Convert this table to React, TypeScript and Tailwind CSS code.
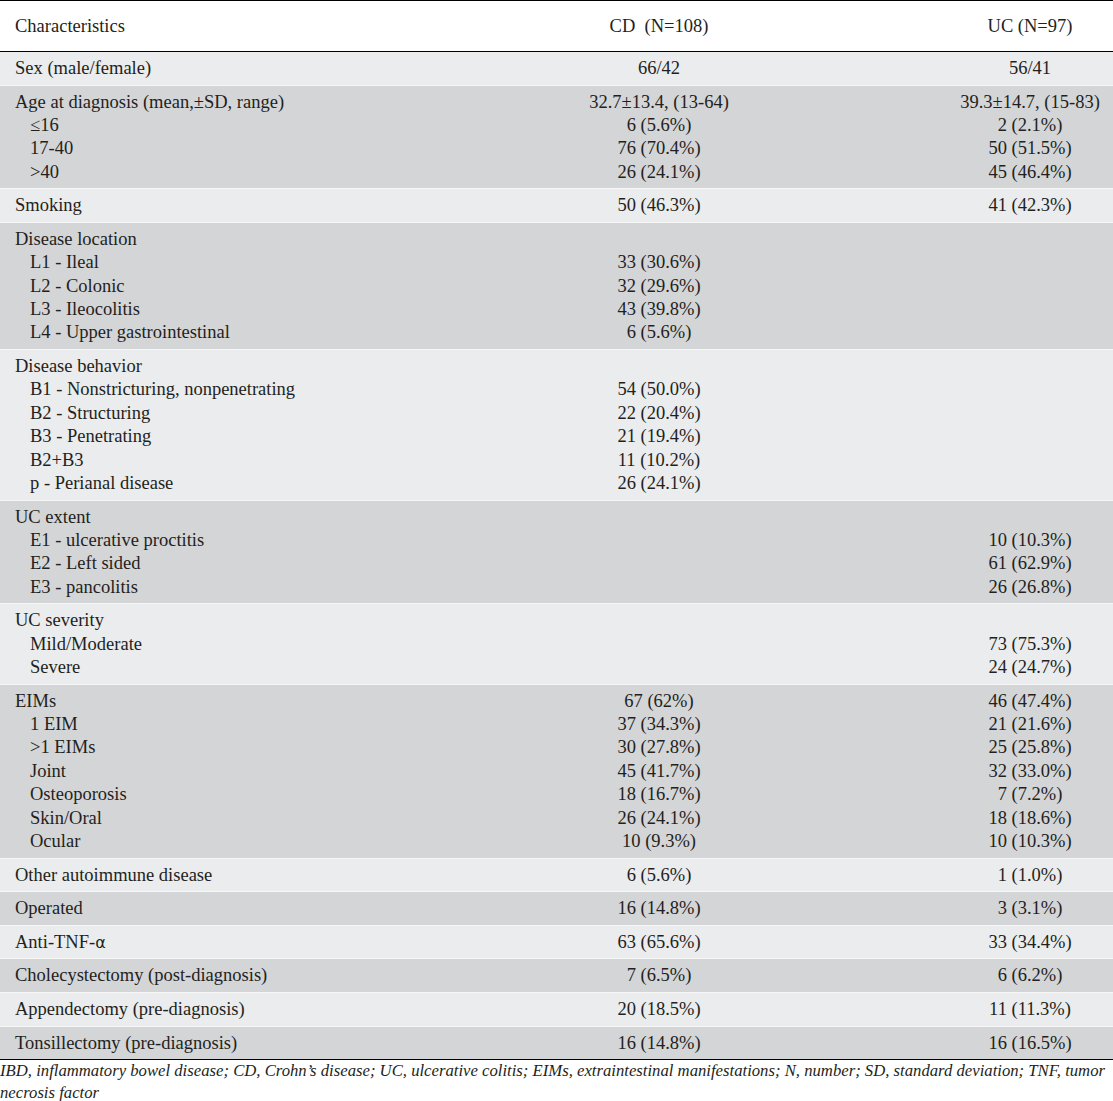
import React from "react";

type Row = { lines: [string, string, string][]; dark: boolean };

const rows: Row[] = [
  { dark: false, lines: [["Sex (male/female)", "66/42", "56/41"]] },
  {
    dark: true,
    lines: [
      ["Age at diagnosis (mean,±SD, range)", "32.7±13.4, (13-64)", "39.3±14.7, (15-83)"],
      ["  ≤16", "6 (5.6%)", "2 (2.1%)"],
      ["  17-40", "76 (70.4%)", "50 (51.5%)"],
      ["  >40", "26 (24.1%)", "45 (46.4%)"],
    ],
  },
  { dark: false, lines: [["Smoking", "50 (46.3%)", "41 (42.3%)"]] },
  {
    dark: true,
    lines: [
      ["Disease location", "", ""],
      ["  L1 - Ileal", "33 (30.6%)", ""],
      ["  L2 - Colonic", "32 (29.6%)", ""],
      ["  L3 - Ileocolitis", "43 (39.8%)", ""],
      ["  L4 - Upper gastrointestinal", "6 (5.6%)", ""],
    ],
  },
  {
    dark: false,
    lines: [
      ["Disease behavior", "", ""],
      ["  B1 - Nonstricturing, nonpenetrating", "54 (50.0%)", ""],
      ["  B2 - Structuring", "22 (20.4%)", ""],
      ["  B3 - Penetrating", "21 (19.4%)", ""],
      ["  B2+B3", "11 (10.2%)", ""],
      ["  p - Perianal disease", "26 (24.1%)", ""],
    ],
  },
  {
    dark: true,
    lines: [
      ["UC extent", "", ""],
      ["  E1 - ulcerative proctitis", "", "10 (10.3%)"],
      ["  E2 - Left sided", "", "61 (62.9%)"],
      ["  E3 - pancolitis", "", "26 (26.8%)"],
    ],
  },
  {
    dark: false,
    lines: [
      ["UC severity", "", ""],
      ["  Mild/Moderate", "", "73 (75.3%)"],
      ["  Severe", "", "24 (24.7%)"],
    ],
  },
  {
    dark: true,
    lines: [
      ["EIMs", "67 (62%)", "46 (47.4%)"],
      ["  1 EIM", "37 (34.3%)", "21 (21.6%)"],
      ["  >1 EIMs", "30 (27.8%)", "25 (25.8%)"],
      ["  Joint", "45 (41.7%)", "32 (33.0%)"],
      ["  Osteoporosis", "18 (16.7%)", "7 (7.2%)"],
      ["  Skin/Oral", "26 (24.1%)", "18 (18.6%)"],
      ["  Ocular", "10 (9.3%)", "10 (10.3%)"],
    ],
  },
  { dark: false, lines: [["Other autoimmune disease", "6 (5.6%)", "1 (1.0%)"]] },
  { dark: true, lines: [["Operated", "16 (14.8%)", "3 (3.1%)"]] },
  { dark: false, lines: [["Anti-TNF-α", "63 (65.6%)", "33 (34.4%)"]] },
  { dark: true, lines: [["Cholecystectomy (post-diagnosis)", "7 (6.5%)", "6 (6.2%)"]] },
  { dark: false, lines: [["Appendectomy (pre-diagnosis)", "20 (18.5%)", "11 (11.3%)"]] },
  { dark: true, lines: [["Tonsillectomy (pre-diagnosis)", "16 (14.8%)", "16 (16.5%)"]] },
];

function Label({ text }: { text: string }) {
  const indented = text.startsWith("  ");
  const t = indented ? text.slice(2) : text;
  if (t === "Anti-TNF-α") {
    return (
      <div className="h-[23.4px] whitespace-nowrap">
        Anti-TNF-<span className="font-['DejaVu_Sans',sans-serif] text-[16px]">α</span>
      </div>
    );
  }
  return <div className={`h-[23.4px] whitespace-nowrap ${indented ? "pl-[15px]" : ""}`}>{t}</div>;
}

export default function App() {
  return (
    <div className="w-[1113px] bg-white text-[#231f20] font-['Liberation_Serif',serif] text-[18.5px] leading-[23.4px]">
      <div className="border-t border-black" />
      <div className="grid grid-cols-[371px_576px_166px] h-[50px] items-center pt-[2px]">
        <div className="pl-[15px]">Characteristics</div>
        <div className="text-center whitespace-pre">CD  (N=108)</div>
        <div className="text-center">UC (N=97)</div>
      </div>
      <div className="border-t border-black" />
      {rows.map((r, i) => (
        <div
          key={i}
          className={`grid grid-cols-[371px_576px_166px] pt-[5px] pb-[4.2px] ${i > 0 ? "border-t border-[#f7f7f8]" : ""} ${
            r.dark ? "bg-[#d4d5d7]" : "bg-[#ebecee]"
          }`}
        >
          <div className="pl-[15px]">
            {r.lines.map((l, j) => (
              <Label key={j} text={l[0]} />
            ))}
          </div>
          <div className="text-center">
            {r.lines.map((l, j) => (
              <div key={j} className="h-[23.4px] whitespace-nowrap">
                {l[1]}
              </div>
            ))}
          </div>
          <div className="text-center">
            {r.lines.map((l, j) => (
              <div key={j} className="h-[23.4px] whitespace-nowrap">
                {l[2]}
              </div>
            ))}
          </div>
        </div>
      ))}
      <div className="border-t border-black" />
      <p className="italic text-[16.7px] leading-[21.5px] whitespace-nowrap">
        IBD, inflammatory bowel disease; CD, Crohn’s disease; UC, ulcerative colitis; EIMs, extraintestinal
        manifestations; N, number; SD, standard deviation; TNF, tumor
        <br />
        necrosis factor
      </p>
    </div>
  );
}
